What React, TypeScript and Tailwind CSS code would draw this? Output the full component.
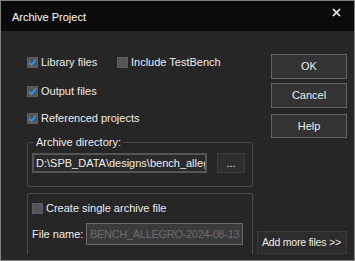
import React from 'react';

const font = "font-['Liberation_Sans',Arial,sans-serif]";

const Check: React.FC<{ checked?: boolean }> = ({ checked }) => (
  <span className="w-[11px] h-[11px] bg-[#555555] border border-[#5e5e5e] flex items-center justify-center shrink-0">
    {checked && (
      <svg width="9" height="9" viewBox="0 0 9 9">
        <path d="M1 4.5 L3.5 7 L8 1.5" fill="none" stroke="#2e9bff" strokeWidth="1.6" />
      </svg>
    )}
  </span>
);

const CheckRow: React.FC<{ label: string; checked?: boolean; className?: string }> = ({ label, checked, className }) => (
  <div className={`h-[11px] flex items-center gap-[3px] ${className ?? ''}`}>
    <Check checked={checked} />
    <span className="text-[11px] leading-none text-[#ededed] whitespace-nowrap">{label}</span>
  </div>
);

const Btn: React.FC<{ label: string; className?: string }> = ({ label, className }) => (
  <button className={`bg-[#333333] border border-[#646464] text-[11px] text-[#ededed] flex items-center justify-center ${className ?? ''}`}>
    {label}
  </button>
);

export default function App() {
  return (
    <div className={`w-[355px] h-[261px] border border-[#808080] bg-[#262626] flex flex-col overflow-hidden ${font}`}>
      <div className="h-[30px] bg-[#0b0b0b] flex items-start justify-between pl-[11px] pr-[13px] pt-[11px] shrink-0">
        <span className="text-[11px] leading-none text-white">Archive Project</span>
        <svg width="9" height="9" viewBox="0 0 9 9" className="-mt-[4px]">
          <path d="M1 1 L8 8 M8 1 L1 8" stroke="white" strokeWidth="1.5" />
        </svg>
      </div>

      <div className="flex flex-1">
        {/* left column */}
        <div className="w-[252px] pl-[26px] pt-[26px] flex flex-col shrink-0">
          <div className="flex">
            <CheckRow label="Library files" checked className="w-[90px]" />
            <CheckRow label="Include TestBench" />
          </div>
          <CheckRow label="Output files" checked className="mt-[18px]" />
          <CheckRow label="Referenced projects" checked className="mt-[16px]" />

          <div className="relative mt-[18px] h-[45px] border border-[#4a4a4a] rounded-[3px] pl-[4px] pt-[10px] flex gap-[10px]">
            <span className="absolute left-[6px] -top-[7px] px-[2px] bg-[#262626] text-[11px] leading-[13px] text-[#ededed]">
              Archive directory:
            </span>
            <div className="w-[175px] h-[20px] bg-[#2a2a2a] border-2 border-[#555555] text-[11px] leading-none text-[#ededed] flex items-center pl-[2px] overflow-hidden whitespace-nowrap">
              D:\SPB_DATA\designs\bench_allegro
            </div>
            <button className="w-[28px] h-[20px] bg-[#2e2e2e] border border-[#3e3e3e] text-[11px] text-[#ededed] leading-none">
              ...
            </button>
          </div>

          <div className="mt-[6px] h-[61px] border border-b-0 border-[#4a4a4a] rounded-t-[3px] pl-[4px] pt-[9px] flex flex-col">
            <CheckRow label="Create single archive file" />
            <div className="mt-[9px] flex items-center gap-[6px]">
              <span className="text-[11px] leading-none text-[#ededed] w-[48px] whitespace-nowrap">File name:</span>
              <div className="w-[157px] h-[22px] bg-[#3a3a3a] border border-[#6a6a6a] text-[11px] tracking-[-0.3px] leading-none text-[#6c6c6c] flex items-center pl-[3px] overflow-hidden whitespace-nowrap">
                BENCH_ALLEGRO-2024-08-13
              </div>
            </div>
          </div>
        </div>

        {/* right column */}
        <div className="flex-1 flex flex-col items-end pr-[7px] pt-[23px]">
          <Btn label="OK" className="w-[76px] h-[25px]" />
          <Btn label="Cancel" className="w-[76px] h-[25px] mt-[4px]" />
          <Btn label="Help" className="w-[76px] h-[24px] mt-[6px]" />
          <button className="mt-[93px] w-[90px] h-[23px] bg-[#2c2c2c] border border-[#3a3a3a] text-[10.5px] tracking-[-0.2px] text-[#ededed] text-left pl-[4px] whitespace-nowrap">
            Add more files &gt;&gt;
          </button>
        </div>
      </div>
    </div>
  );
}
